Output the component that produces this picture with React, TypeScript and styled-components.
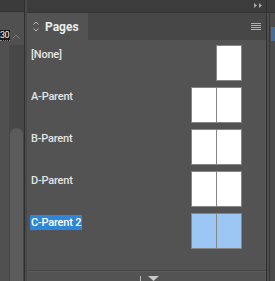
import React from 'react';
import styled, { createGlobalStyle } from 'styled-components';

const GlobalStyle = createGlobalStyle`
  html, body {
    margin: 0;
    padding: 0;
    background: #535353;
    overflow: hidden;
  }
  * {
    box-sizing: border-box;
  }
`;

type Master = {
  name: string;
  pages: number;
  selected?: boolean;
};

const masters: Master[] = [
  { name: '[None]', pages: 1 },
  { name: 'A-Parent', pages: 2 },
  { name: 'B-Parent', pages: 2 },
  { name: 'D-Parent', pages: 2 },
  { name: 'C-Parent 2', pages: 2, selected: true },
];

const App = () => {
  return (
    <>
      <GlobalStyle />
      <Screen>
        <LeftDock>
          <DockCap />
          <RulerArea>
            <RulerValue>30</RulerValue>
            <Caret>
              <svg width="8" height="5" viewBox="0 0 8 5">
                <polyline points="0.5,4.5 4,1 7.5,4.5" fill="none" stroke="#7a7a7a" strokeWidth="1" />
              </svg>
            </Caret>
          </RulerArea>
          <ScrollTrack>
            <ScrollThumb />
          </ScrollTrack>
        </LeftDock>
        <DockDivider />
        <Panel>
          <PanelHeader>
            <svg width="8" height="5" viewBox="0 0 8 5">
              <polygon points="0,0 3,2.5 0,5" fill="#a8a8a8" />
              <polygon points="5,0 8,2.5 5,5" fill="#a8a8a8" />
            </svg>
          </PanelHeader>
          <TabBar>
            <Tab>
              <svg width="6" height="11" viewBox="0 0 6 11">
                <polyline points="0.5,3.5 3,1 5.5,3.5" fill="none" stroke="#b4b4b4" strokeWidth="1" />
                <polyline points="0.5,7.5 3,10 5.5,7.5" fill="none" stroke="#b4b4b4" strokeWidth="1" />
              </svg>
              <TabTitle>Pages</TabTitle>
            </Tab>
            <MenuIcon>
              <span />
              <span />
              <span />
              <span />
            </MenuIcon>
          </TabBar>
          <PanelBody>
            {masters.map((m) => (
              <MasterRow key={m.name}>
                <MasterLabel $selected={m.selected}>{m.name}</MasterLabel>
                <Spread>
                  {Array.from({ length: m.pages }).map((_, i) => (
                    <PageThumb key={i} $selected={m.selected} />
                  ))}
                </Spread>
              </MasterRow>
            ))}
          </PanelBody>
          <PanelFooter>
            <Tick />
            <svg width="11" height="5" viewBox="0 0 11 5">
              <polygon points="0,0 11,0 5.5,5" fill="#c8c8c8" />
            </svg>
          </PanelFooter>
        </Panel>
        <RightDock>
          <RightCap />
          <RightBody>
            <RightGap />
            <RightLine />
            <RightTrack>
              <RightMark />
            </RightTrack>
          </RightBody>
        </RightDock>
      </Screen>
    </>
  );
};

export default App;

const Screen = styled.div`
  width: 275px;
  height: 281px;
  display: flex;
  font-family: Roboto, 'Liberation Sans', sans-serif;
  background: #535353;
`;

const LeftDock = styled.div`
  width: 24px;
  display: flex;
  flex-direction: column;
  background: #505050;
`;

const DockCap = styled.div`
  height: 12px;
  background: #3b3b3b;
  border-bottom: 1px solid #333;
`;

const RulerArea = styled.div`
  height: 33px;
  display: flex;
  align-items: flex-start;
  padding-top: 18px;
`;

const RulerValue = styled.div`
  width: 10px;
  height: 11px;
  background: #1c1c1c;
  color: #f0f0f0;
  font-size: 9px;
  line-height: 11px;
  letter-spacing: -0.5px;
  overflow: hidden;
  white-space: nowrap;
  border-bottom: 1px dotted #888;
`;

const Caret = styled.div`
  margin-left: 2px;
  padding-top: 4px;
  display: flex;
`;

const ScrollTrack = styled.div`
  flex: 1;
  margin-left: 9px;
  background: #474747;
  padding-top: 83px;
  display: flex;
  flex-direction: column;
`;

const ScrollThumb = styled.div`
  flex: 1;
  margin: 0 1px;
  background: #5b5b5b;
  border-radius: 7px 7px 0 0;
`;

const DockDivider = styled.div`
  width: 3px;
  background: #494949;
  border-left: 1px solid #2f2f2f;
`;

const Panel = styled.div`
  width: 239px;
  display: flex;
  flex-direction: column;
`;

const PanelHeader = styled.div`
  height: 13px;
  background: #3c3c3c;
  border-bottom: 1px solid #343434;
  display: flex;
  justify-content: flex-end;
  align-items: center;
  padding: 0 4px 1px 0;
`;

const TabBar = styled.div`
  height: 27px;
  background: #474747;
  display: flex;
  align-items: stretch;
`;

const Tab = styled.div`
  width: 61px;
  background: #535353;
  display: flex;
  align-items: center;
  gap: 6px;
  padding-left: 6px;
`;

const TabTitle = styled.span`
  color: #ececec;
  font-size: 12px;
  font-weight: 700;
`;

const MenuIcon = styled.div`
  margin-left: auto;
  margin-right: 5px;
  width: 10px;
  display: flex;
  flex-direction: column;
  justify-content: center;
  gap: 1px;

  span {
    display: block;
    height: 1px;
    background: #b0b0b0;
  }
`;

const PanelBody = styled.div`
  flex: 1;
  padding: 5px 24px 0 3px;
  display: flex;
  flex-direction: column;
  gap: 6px;
  background: #535353;
`;

const MasterRow = styled.div`
  height: 36px;
  display: flex;
  justify-content: space-between;
  align-items: flex-start;
`;

const MasterLabel = styled.span<{ $selected?: boolean }>`
  margin-top: 2px;
  padding: 0 1px;
  font-size: 11px;
  line-height: 15px;
  letter-spacing: -0.2px;
  font-weight: 500;
  color: ${(p) => (p.$selected ? '#ffffff' : '#e4e4e4')};
  background: ${(p) => (p.$selected ? '#2f86d8' : 'transparent')};
`;

const Spread = styled.div`
  display: flex;
`;

const PageThumb = styled.div<{ $selected?: boolean }>`
  width: 26px;
  height: 36px;
  background: ${(p) => (p.$selected ? '#9cc6f3' : '#ffffff')};
  border: 1px solid #868686;

  & + & {
    margin-left: -1px;
  }
`;

const PanelFooter = styled.div`
  height: 11px;
  border-top: 1px solid #474747;
  box-shadow: inset 0 1px 0 #5c5c5c;
  display: flex;
  align-items: flex-end;
  padding-left: 113px;
  gap: 7px;
`;

const Tick = styled.div`
  width: 1px;
  height: 5px;
  background: #b8b8b8;
`;

const RightDock = styled.div`
  flex: 1;
  display: flex;
  flex-direction: column;
  border-left: 1px solid #2f2f2f;
`;

const RightCap = styled.div`
  height: 13px;
  background: #3c3c3c;
  border-bottom: 1px solid #343434;
`;

const RightBody = styled.div`
  flex: 1;
  display: flex;
`;

const RightGap = styled.div`
  width: 2px;
  background: #4d4d4d;
`;

const RightLine = styled.div`
  width: 1px;
  background: #353535;
`;

const RightTrack = styled.div`
  flex: 1;
  background: #4b4b4b;
  padding: 14px 0 0 1px;
`;

const RightMark = styled.div`
  height: 14px;
  background: #4a6d97;
`;
